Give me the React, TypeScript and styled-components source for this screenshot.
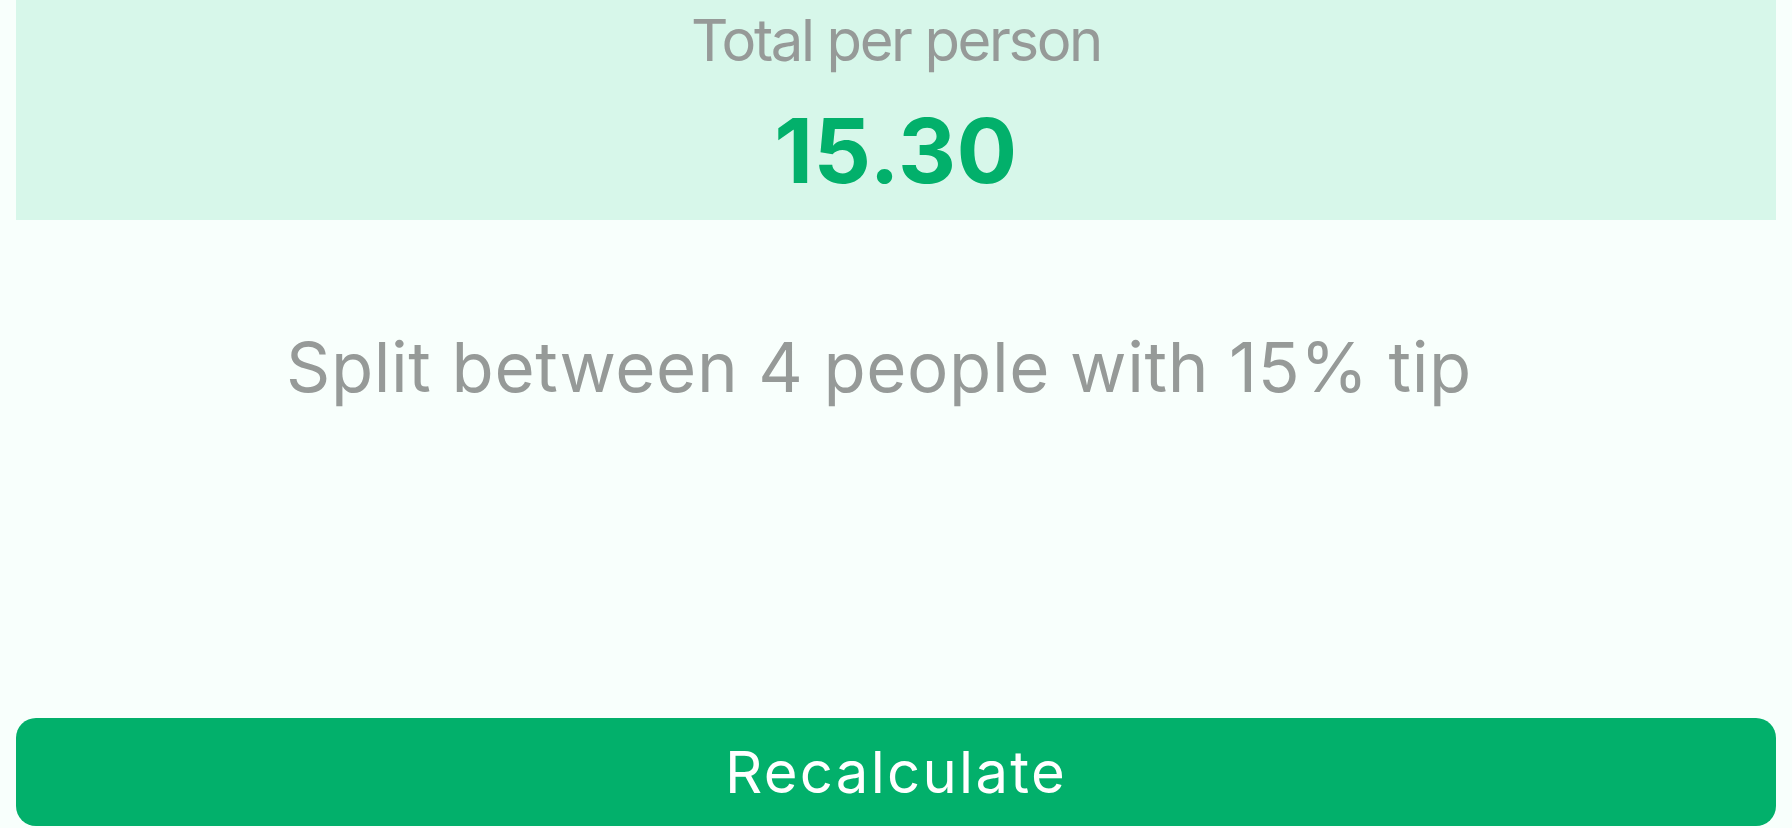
import React from "react";
import styled, { createGlobalStyle } from "styled-components";

const Global = createGlobalStyle`
  html, body { margin: 0; padding: 0; background: #f8fffc; }
  body { font-family: Inter, "Open Sans", sans-serif; }
`;

const Screen = styled.div`
  box-sizing: border-box;
  height: 828px;
  padding: 0 16px 2px;
  display: flex;
  flex-direction: column;
  background: #f8fffc;
`;

const Summary = styled.section`
  height: 220px;
  flex-shrink: 0;
  background: #d7f7ea;
  display: flex;
  flex-direction: column;
  align-items: center;
  padding-top: 5px;
  box-sizing: border-box;
`;

const Label = styled.div`
  font-size: 58px;
  line-height: 70px;
  color: #969a98;
  letter-spacing: -2.4px;
`;

const Amount = styled.div`
  margin-top: 26px;
  font-size: 90px;
  line-height: 100px;
  font-weight: 700;
  color: #02b06b;
  letter-spacing: 0.5px;
`;

const Middle = styled.main`
  flex: 1;
  display: flex;
  justify-content: center;
  padding: 107px 34px 0 0;
`;

const Detail = styled.p`
  margin: 0;
  font-size: 69px;
  line-height: 80px;
  color: #969a98;
  letter-spacing: 0.6px;
`;

const Action = styled.button`
  height: 108px;
  flex-shrink: 0;
  border: none;
  border-radius: 20px;
  background: #02b06b;
  color: #ffffff;
  font-family: Inter, sans-serif;
  font-size: 58px;
  letter-spacing: 2.3px;
  cursor: pointer;
`;

export default function App() {
  return (
    <>
      <Global />
      <Screen>
        <Summary>
          <Label>Total per person</Label>
          <Amount>15.30</Amount>
        </Summary>
        <Middle>
          <Detail>Split between 4 people with 15% tip</Detail>
        </Middle>
        <Action>Recalculate</Action>
      </Screen>
    </>
  );
}
